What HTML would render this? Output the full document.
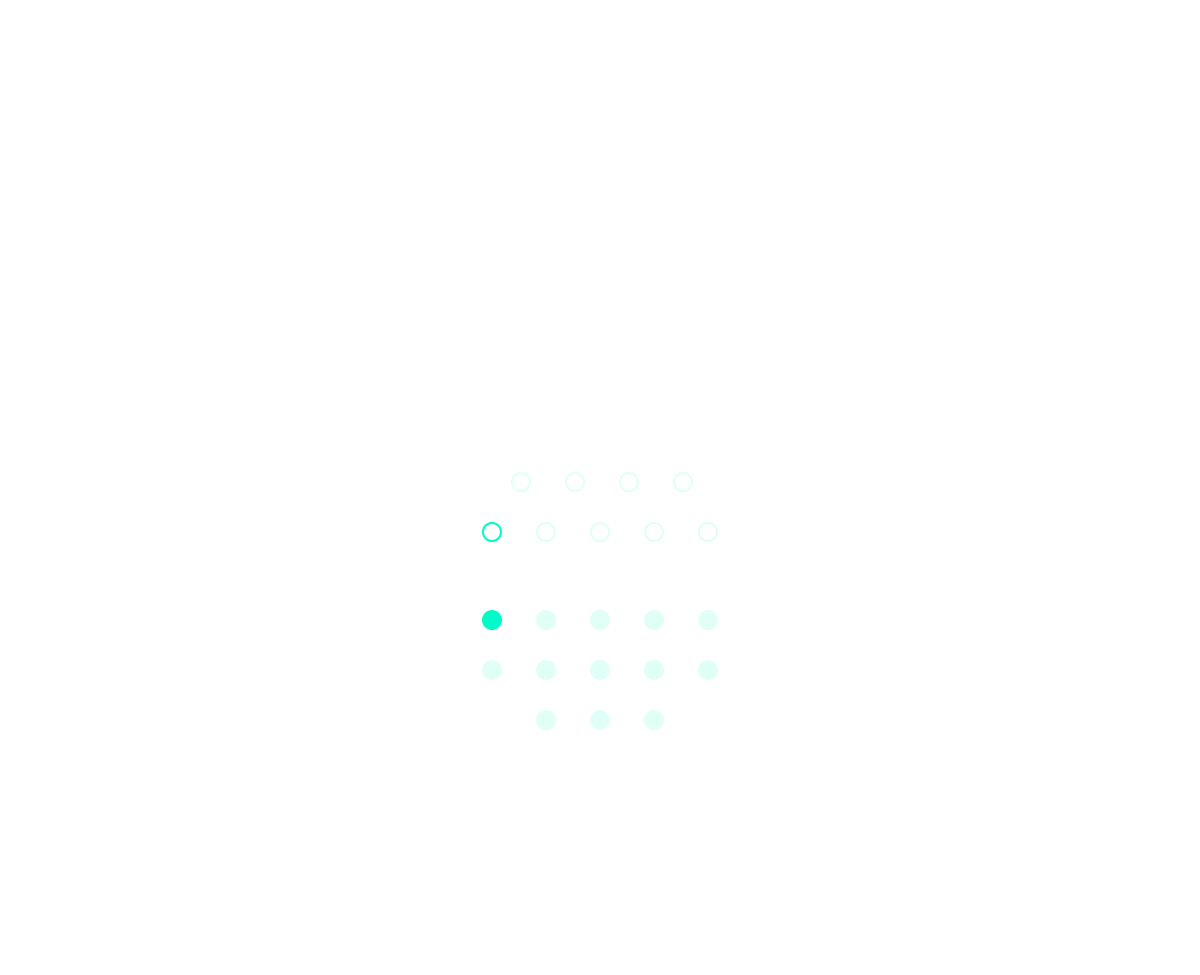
<!DOCTYPE html>
<html><head><style>html,body{margin:0;background:#fff;width:1200px;height:975px;overflow:hidden}</style></head>
<body>
<svg width="1200" height="975" xmlns="http://www.w3.org/2000/svg">
<g fill="none" stroke="#e0fff6" stroke-width="2">
<circle cx="521" cy="482" r="9"/><circle cx="575" cy="482" r="9"/><circle cx="629" cy="482" r="9"/><circle cx="683" cy="482" r="9"/>
<circle cx="546" cy="532" r="9"/><circle cx="600" cy="532" r="9"/><circle cx="654" cy="532" r="9"/><circle cx="708" cy="532" r="9"/>
</g>
<circle cx="492" cy="532" r="9" fill="none" stroke="#00fbc8" stroke-width="2"/>
<circle cx="492" cy="620" r="10" fill="#00fbc8"/>
<g fill="#e0fff6">
<circle cx="546" cy="620" r="10"/><circle cx="600" cy="620" r="10"/><circle cx="654" cy="620" r="10"/><circle cx="708" cy="620" r="10"/>
<circle cx="492" cy="670" r="10"/><circle cx="546" cy="670" r="10"/><circle cx="600" cy="670" r="10"/><circle cx="654" cy="670" r="10"/><circle cx="708" cy="670" r="10"/>
<circle cx="546" cy="720" r="10"/><circle cx="600" cy="720" r="10"/><circle cx="654" cy="720" r="10"/>
</g>
</svg>
</body></html>
